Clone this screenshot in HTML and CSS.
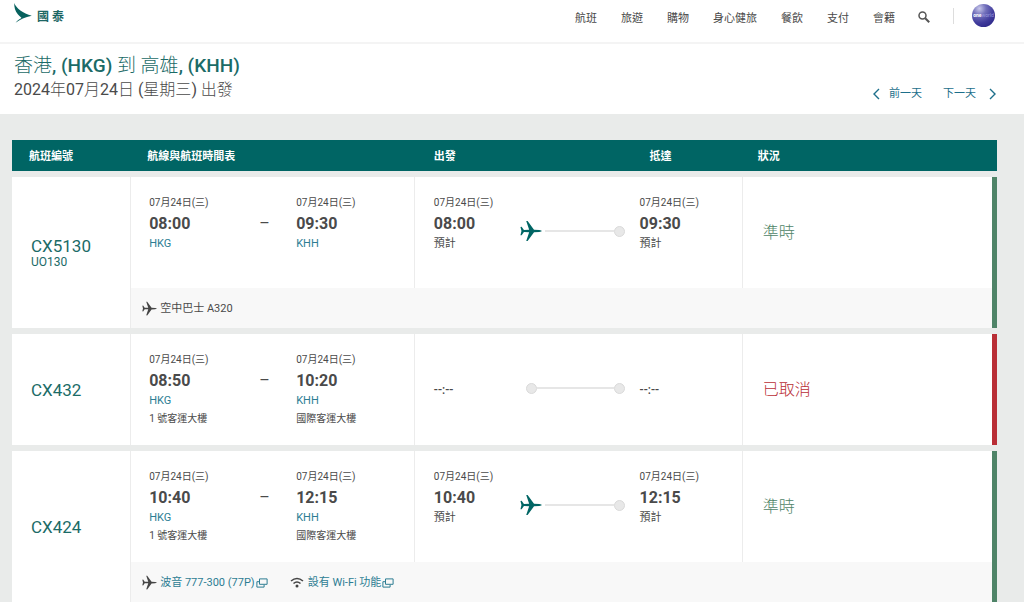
FILE: index.html
```html
<!DOCTYPE html>
<html lang="zh-Hant-HK">
<head>
<meta charset="utf-8">
<meta name="viewport" content="width=device-width, initial-scale=1">
<title>國泰 - 航班狀況</title>
<link rel="stylesheet" href="styles.css">
</head>
<body>
<svg class="sprite" aria-hidden="true">
  <symbol id="plane" viewBox="0 0 24 24"><path d="M.5 7.500 1.800 7.300 4.300 10.800 10 10.700 6.800 1.200 8.300 1 15.300 10.600 21 11Q23.800 11.400 23.800 12 23.800 12.600 21 13L15.300 13.400 8.300 23 6.800 22.800 10 13.300 4.300 13.200 1.800 16.700.5 16.500 1.600 12Z"/></symbol>
  <symbol id="popup" viewBox="0 0 12 10"><path d="M3.500.9h7.600v5.400H3.500zM3 3.700H.9v5.400h7.200V6.800" fill="none" stroke="currentColor" stroke-width="1"/></symbol>
</svg>

<header class="site-header">
  <a class="brand" href="#">
    <svg class="brand-mark" viewBox="0 0 18 20" aria-hidden="true"><path d="M.3 0C2 5 9 10.600 17.800 12.800 11 14.400 6 16.400 1.600 19.800 3.500 17 6 15.800 7.500 15 6.500 13.600 5 12.600 3.800 11.200 1.200 8.500 0 4 .3 0Z"/></svg>
    <span>國 泰</span>
  </a>
  <nav class="main-nav" aria-label="主選單">
    <a href="#">航班</a><a href="#">旅遊</a><a href="#">購物</a><a href="#">身心健旅</a><a href="#">餐飲</a><a href="#">支付</a><a href="#">會籍</a>
  </nav>
  <button class="search" type="button" aria-label="搜尋">
    <svg viewBox="0 0 12 12" aria-hidden="true"><circle cx="4.500" cy="4.500" r="3.500"/><path d="M7.200 7.200 11.200 11.200"/></svg>
  </button>
  <a class="alliance" href="#"><b>one</b>world</a>
</header>

<section class="summary">
  <div>
    <h1>香港<b>, (HKG)</b> 到 高雄<b>, (KHH)</b></h1>
    <p class="date-line"><b>2024</b>年<b>07</b>月<b>24</b>日 <b>(</b>星期三<b>)</b> 出發</p>
  </div>
  <nav class="day-nav" aria-label="日期">
    <a class="previous" href="#"><svg viewBox="0 0 7 12" aria-hidden="true"><path d="M6 1 1 6 6 11"/></svg>前一天</a>
    <a class="next" href="#">下一天<svg viewBox="0 0 7 12" aria-hidden="true"><path d="M1 1 6 6 1 11"/></svg></a>
  </nav>
</section>

<main class="results">
  <table class="flights">
    <colgroup><col class="c-number"><col class="c-route"><col class="c-depart"><col class="c-arrive"><col></colgroup>
    <thead>
      <tr><th scope="col">航班編號</th><th scope="col">航線與航班時間表</th><th scope="col">出發</th><th scope="col">抵達</th><th scope="col">狀況</th></tr>
    </thead>
    <tbody class="flight on-time">
      <tr class="main-row">
        <td class="number" rowspan="2"><a href="#">CX5130</a><small>UO130</small></td>
        <td class="route"><div class="legs">
          <div class="stop"><span class="day">07月24日(三)</span><strong>08:00</strong><a href="#">HKG</a></div>
          <span class="dash">–</span>
          <div class="stop"><span class="day">07月24日(三)</span><strong>09:30</strong><a href="#">KHH</a></div>
        </div></td>
        <td class="depart"><div class="legs">
          <div class="stop"><span class="day">07月24日(三)</span><strong>08:00</strong><span class="note">預計</span></div>
          <div class="track"><svg class="track-plane" aria-hidden="true"><use href="#plane"/></svg><i class="line"></i><i class="dot"></i></div>
        </div></td>
        <td class="arrive"><div class="stop"><span class="day">07月24日(三)</span><strong>09:30</strong><span class="note">預計</span></div></td>
        <td class="status">準時</td>
      </tr>
      <tr class="detail-row"><td colspan="4"><div class="details">
        <span class="detail"><svg class="plane" aria-hidden="true"><use href="#plane"/></svg>空中巴士 A320</span>
      </div></td></tr>
    </tbody>
    <tbody class="flight cancelled">
      <tr class="main-row">
        <td class="number"><a href="#">CX432</a></td>
        <td class="route"><div class="legs">
          <div class="stop"><span class="day">07月24日(三)</span><strong>08:50</strong><a href="#">HKG</a><span class="terminal">1 號客運大樓</span></div>
          <span class="dash">–</span>
          <div class="stop"><span class="day">07月24日(三)</span><strong>10:20</strong><a href="#">KHH</a><span class="terminal">國際客運大樓</span></div>
        </div></td>
        <td class="depart"><div class="legs">
          <div class="stop unknown">--:--</div>
          <div class="track"><i class="dot"></i><i class="line"></i><i class="dot"></i></div>
        </div></td>
        <td class="arrive"><div class="stop unknown">--:--</div></td>
        <td class="status">已取消</td>
      </tr>
    </tbody>
    <tbody class="flight on-time">
      <tr class="main-row">
        <td class="number" rowspan="2"><a href="#">CX424</a></td>
        <td class="route"><div class="legs">
          <div class="stop"><span class="day">07月24日(三)</span><strong>10:40</strong><a href="#">HKG</a><span class="terminal">1 號客運大樓</span></div>
          <span class="dash">–</span>
          <div class="stop"><span class="day">07月24日(三)</span><strong>12:15</strong><a href="#">KHH</a><span class="terminal">國際客運大樓</span></div>
        </div></td>
        <td class="depart"><div class="legs">
          <div class="stop"><span class="day">07月24日(三)</span><strong>10:40</strong><span class="note">預計</span></div>
          <div class="track"><svg class="track-plane" aria-hidden="true"><use href="#plane"/></svg><i class="line"></i><i class="dot"></i></div>
        </div></td>
        <td class="arrive"><div class="stop"><span class="day">07月24日(三)</span><strong>12:15</strong><span class="note">預計</span></div></td>
        <td class="status">準時</td>
      </tr>
      <tr class="detail-row"><td colspan="4"><div class="details">
        <a class="detail" href="#"><svg class="plane" aria-hidden="true"><use href="#plane"/></svg>波音 777-300 (77P)<svg class="popup" aria-hidden="true"><use href="#popup"/></svg></a>
        <a class="detail" href="#"><svg class="wifi" viewBox="0 0 14 11" aria-hidden="true"><path d="M1 4Q7-1 13 4M3.500 6.500Q7 3.500 10.500 6.500"/><circle cx="7" cy="9" r="1.500"/></svg>設有 Wi-Fi 功能<svg class="popup" aria-hidden="true"><use href="#popup"/></svg></a>
      </div></td></tr>
    </tbody>
  </table>
</main>
</body>
</html>
```
FILE: styles.css
```css
* { box-sizing: border-box; }
body {
  margin: 0;
  background: #e9ebea;
  color: #4a4a4a;
  font-family: Roboto, "Noto Sans CJK TC", sans-serif;
  font-size: 11px;
  line-height: 16px;
}
a { color: #2d7d93; text-decoration: none; }
.sprite { position: absolute; width: 0; height: 0; }

.site-header {
  display: flex;
  align-items: flex-start;
  height: 44px;
  padding: 0 29px 0 14px;
  background: #fff;
  border-bottom: 2px solid #f4f4f4;
}
.brand {
  display: flex;
  gap: 5px;
  margin-right: auto;
  padding-top: 3px;
  color: #1b6663;
  font-size: 12px;
  font-weight: 700;
}
.brand span { padding-top: 6px; }
.brand-mark { width: 18px; height: 20px; fill: #07615e; }
.main-nav { display: flex; gap: 24px; padding-top: 11px; }
.main-nav a { color: #4a4a4a; }
.search {
  margin: 11px 0 0 23px;
  padding: 0;
  border: 0;
  background: none;
  line-height: 0;
}
.search svg { width: 12px; height: 12px; fill: none; stroke: #555; stroke-width: 2; }
.search circle { stroke-width: 1.5; }
.alliance {
  position: relative;
  width: 23px;
  height: 23px;
  margin: 4px 0 0 42px;
  border-radius: 50%;
  background: radial-gradient(circle at 32% 20%, #c8c8ea 0, #7270bb 28%, #403b9c 60%, #211c7c 100%);
  color: #9b99dc;
  font-size: 5px;
  line-height: 23px;
  text-align: center;
}
.alliance b { color: #fff; }
.alliance::before {
  content: "";
  position: absolute;
  left: -19px;
  top: 4px;
  height: 16px;
  border-left: 1px solid #ddd;
}

.summary {
  display: flex;
  justify-content: space-between;
  align-items: flex-end;
  height: 70px;
  padding: 0 28px 12px 14px;
  background: #fff;
}
h1 {
  margin: 0;
  color: #1b6b67;
  font-size: 19px;
  font-weight: 300;
  line-height: 24px;
}
h1 b { font-weight: 500; }
.date-line { margin: 0; font-size: 16px; font-weight: 300; line-height: 24px; }
.date-line b { font-weight: 400; }
.day-nav { display: flex; gap: 21px; }
.day-nav a { display: flex; align-items: center; color: #1d6f8b; }
.previous { gap: 9px; }
.next { gap: 13px; }
.day-nav svg { width: 7px; height: 12px; fill: none; stroke: #1d6f8b; stroke-width: 1.4; }

.results { padding: 26px 27px 0 12px; }
.flights { width: 100%; table-layout: fixed; border-collapse: separate; border-spacing: 0; }
.c-number { width: 12%; }
.c-route { width: 28.8%; }
.c-depart { width: 21.9%; }
.c-arrive { width: 11.4%; }
th {
  height: 31px;
  padding: 2px 17px 0;
  background: #006564;
  color: #fff;
  text-align: left;
}
th:nth-child(n+3) { padding-left: 20px; }
th:last-child { padding-left: 16px; }
td { height: 111px; padding: 0; background: #fff; }
.flight::before { content: ""; display: block; height: 6px; }
.number { padding: 0 0 0 19px; font-size: 17px; line-height: 18px; }
.number a, .number small { display: block; color: #1b6b67; }
.number small { font-size: 12px; line-height: 14px; }
.route, .depart, .status { box-shadow: inset 1px 0 #ececec; }
.route, .depart, .arrive { vertical-align: top; }
.legs { display: flex; }
.route .legs { padding-left: 19px; }
.depart .legs { padding-left: 20px; }
.arrive { padding-left: 10px; }
.stop {
  display: flex;
  flex-direction: column;
  flex: none;
  align-items: flex-start;
  padding-top: 18px;
  width: 86px;
  white-space: nowrap;
}
.route .stop { width: 110px; }
.day { font-size: 10px; }
.stop strong { margin-top: 1px; font-size: 16px; line-height: 24px; }
.terminal { font-size: 10px; line-height: 20px; }
.dash { flex: none; width: 37px; padding-top: 35px; font-size: 16px; line-height: 24px; }
.unknown { padding-top: 48px; font-size: 12px; font-weight: 500; }
.track { display: flex; flex: 1; align-items: center; height: 20px; margin: 44px 5px 0 0; }
.track-plane { width: 22px; height: 22px; margin-right: 3px; fill: #006564; }
.line { flex: 1; height: 2px; background: #e6e6e6; }
.dot { width: 11px; height: 11px; border: 1px solid #dadada; border-radius: 50%; background: #e8e8e8; }
.dot:first-child { margin-left: 6px; }
.status { padding-left: 21px; font-size: 16px; font-weight: 300; }
.on-time .status { color: #4f8468; }
.cancelled .status { color: #b92e36; }
.status, .detail-row td { border-right: 5px solid #4f8468; }
.cancelled .status { border-right-color: #b92e36; }

.detail-row td { height: 40px; background: #f8f8f8; box-shadow: inset 1px 0 #ececec; }
.details { display: flex; gap: 22px; padding: 1px 0 0 12px; }
.detail { display: flex; align-items: center; }
.plane { width: 15px; height: 15px; margin-right: 3px; fill: #454545; }
.popup { width: 12px; height: 10px; margin-left: 1px; }
.wifi { width: 14px; height: 11px; margin-right: 4px; fill: none; stroke: #454545; stroke-width: 1.6; }
.wifi circle { fill: #454545; stroke: none; }
```
